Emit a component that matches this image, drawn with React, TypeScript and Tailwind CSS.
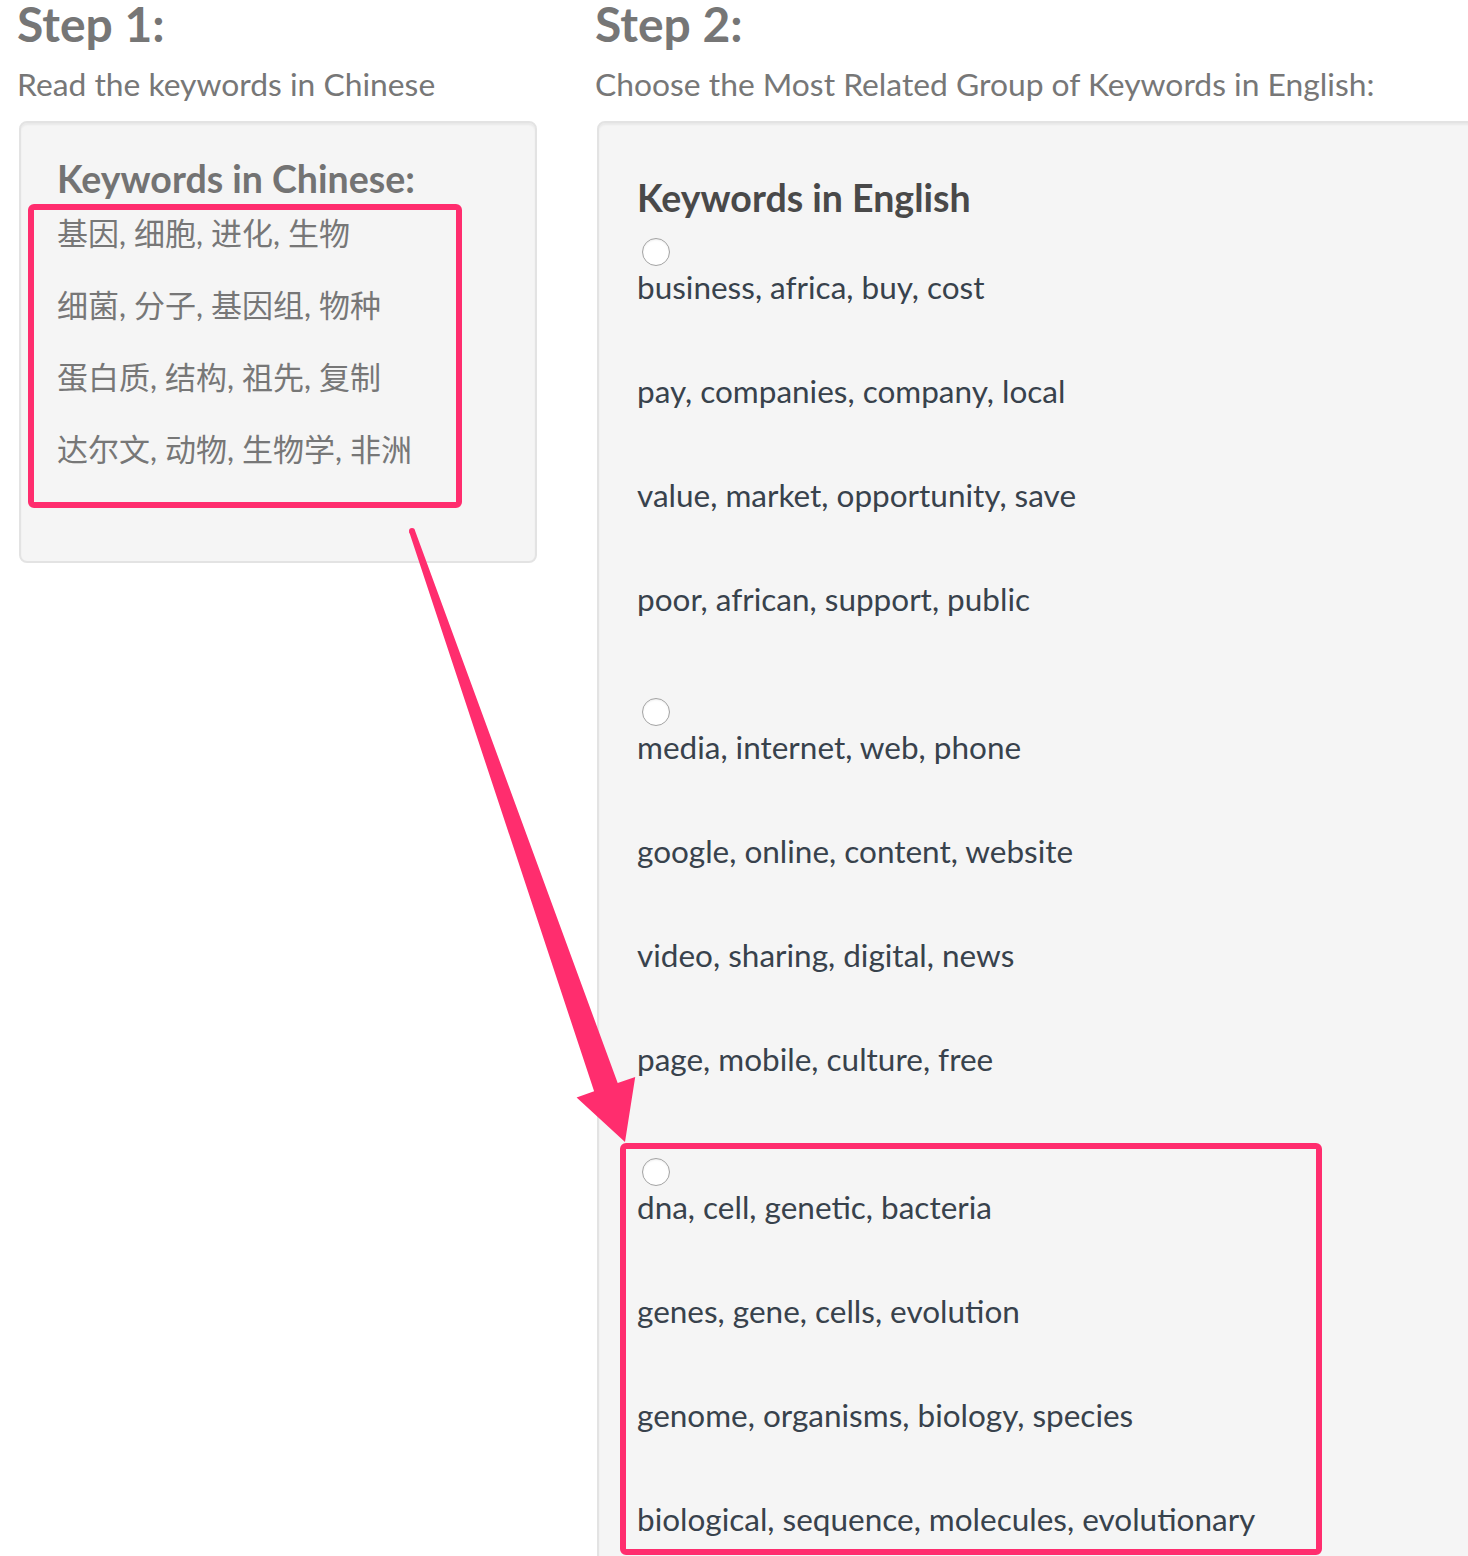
import React from "react";

const zh = [
  "基因, 细胞, 进化, 生物",
  "细菌, 分子, 基因组, 物种",
  "蛋白质, 结构, 祖先, 复制",
  "达尔文, 动物, 生物学, 非洲",
];

const groups = [
  [
    "business, africa, buy, cost",
    "pay, companies, company, local",
    "value, market, opportunity, save",
    "poor, african, support, public",
  ],
  [
    "media, internet, web, phone",
    "google, online, content, website",
    "video, sharing, digital, news",
    "page, mobile, culture, free",
  ],
  [
    "dna, cell, genetic, bacteria",
    "genes, gene, cells, evolution",
    "genome, organisms, biology, species",
    "biological, sequence, molecules, evolutionary",
  ],
];

function Annotations() {
  const T = [412, 531];
  const P = [625, 1142];
  const dx = P[0] - T[0];
  const dy = P[1] - T[1];
  const len = Math.sqrt(dx * dx + dy * dy);
  const u = [dx / len, dy / len];
  const n = [u[1], -u[0]];
  const B = [P[0] - 58 * u[0], P[1] - 58 * u[1]];
  const pt = (base: number[], k: number) =>
    `${(base[0] + k * n[0]).toFixed(1)},${(base[1] + k * n[1]).toFixed(1)}`;
  const points = [
    pt(T, -3),
    pt(B, -12.5),
    pt(B, -31),
    `${P[0]},${P[1]}`,
    pt(B, 31),
    pt(B, 12.5),
    pt(T, 3),
  ].join(" ");
  return (
    <svg
      className="pointer-events-none absolute left-0 top-0"
      width={1468}
      height={1556}
      viewBox="0 0 1468 1556"
    >
      <rect x={31} y={207} width={428} height={298} rx={3} fill="none" stroke="#ff2d6e" strokeWidth={6} />
      <rect x={623} y={1146} width={696} height={406} rx={3} fill="none" stroke="#ff2d6e" strokeWidth={6} />
      <polygon points={points} fill="#ff2d6e" strokeLinejoin="round" />
      <circle cx={T[0]} cy={T[1]} r={3} fill="#ff2d6e" />
    </svg>
  );
}

export default function App() {
  return (
    <div className="relative h-[1556px] w-[1468px] overflow-hidden bg-white font-['Lato','Noto_Sans_CJK_SC',sans-serif]">
      <div className="flex gap-[60px] pl-[19px]">
        {/* Step 1 */}
        <div className="w-[518px] shrink-0">
          <h1 className="-ml-[2px] text-[48px] font-bold leading-[48px] text-[#767676]">Step 1:</h1>
          <p className="-ml-[2px] mt-[20px] text-[31.8px] leading-[32px] text-[#777777]">
            Read the keywords in Chinese
          </p>
          <div className="mt-[21px] rounded-[8px] border-2 border-[#e3e3e3] bg-[#f5f5f5] pb-[76px] pl-[36px] pr-[38px] pt-[38px] shadow-[inset_0_2px_2px_rgba(0,0,0,0.05)]">
            <h4 className="text-[37.5px] font-bold leading-[36px] text-[#737373]">Keywords in Chinese:</h4>
            {zh.map((l) => (
              <div key={l} className="text-[31px] leading-[72px] text-[#777777]">
                {l}
              </div>
            ))}
          </div>
        </div>

        {/* Step 2 */}
        <div className="w-[900px] shrink-0">
          <h1 className="-ml-[2px] text-[48px] font-bold leading-[48px] text-[#767676]">Step 2:</h1>
          <p className="-ml-[2px] mt-[20px] text-[31.8px] leading-[32px] text-[#777777]">
            Choose the Most Related Group of Keywords in English:
          </p>
          <div className="mt-[21px] rounded-[8px] border-2 border-[#e3e3e3] bg-[#f5f5f5] px-[38px] pb-[38px] pt-[38px] shadow-[inset_0_2px_2px_rgba(0,0,0,0.05)]">
            <h3 className="mt-[19px] text-[37.5px] font-bold leading-[36px] text-[#494949]">
              Keywords in English
            </h3>
            <div className="mt-[22px] flex flex-col gap-[83px]">
              {groups.map((g, gi) => (
                <div key={gi} className="flex flex-col">
                  <input
                    type="radio"
                    name="group"
                    className="ml-[5px] block h-[28px] w-[28px] appearance-none rounded-full border border-[#a3a3a3] bg-white shadow-[inset_0_1px_2px_rgba(0,0,0,0.08)]"
                  />
                  <div className="mt-[5px] flex flex-col gap-[72px]">
                    {g.map((l) => (
                      <div key={l} className="text-[31.5px] leading-[32px] text-[#38424c]">
                        {l}
                      </div>
                    ))}
                  </div>
                </div>
              ))}
            </div>
          </div>
        </div>
      </div>
      <Annotations />
    </div>
  );
}
